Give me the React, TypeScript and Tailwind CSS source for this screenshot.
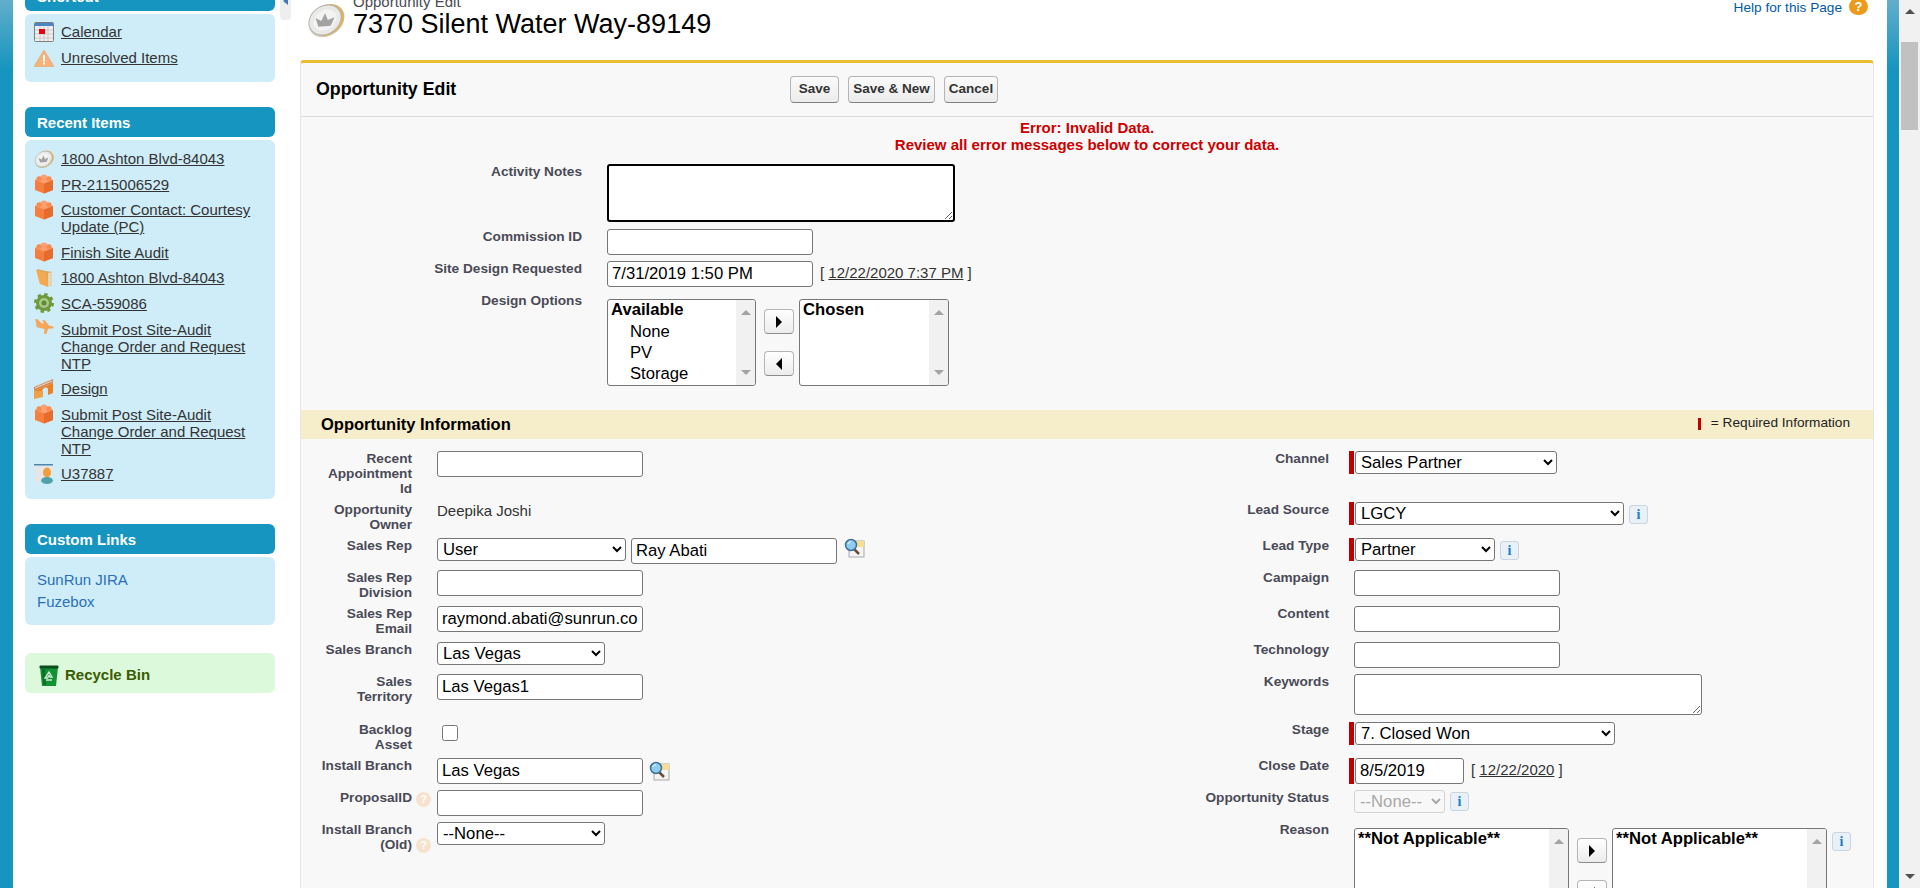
import type { ReactNode } from "react";

function Coin({ className }: { className: string }) {
  return (
    <svg viewBox="0 0 40 36" className={className}>
      <ellipse cx="20.500" cy="19" rx="20" ry="15.500" transform="rotate(-35 20.500 19)" fill="#a39a83" opacity="0.5" />
      <ellipse cx="21" cy="18" rx="19.500" ry="15.500" transform="rotate(-35 21 18)" fill="#dcb568" />
      <ellipse cx="19" cy="18" rx="18" ry="14.500" transform="rotate(-35 19 18)" fill="#e9e9e7" stroke="#b4b4b2" strokeWidth="1" />
      <ellipse cx="19" cy="18" rx="13" ry="10" transform="rotate(-35 19 18)" fill="#f3f3f2" />
      <path d="M12 25l-3-9 6 3 4-8 3 7 7-3-4 9z" fill="#a2a2a2" />
    </svg>
  );
}

function Brick() {
  return (
    <svg viewBox="0 0 20 20" className="w-[20px] h-[20px] shrink-0">
      <path d="M1 6l9-3 9 3v10l-9 3.500L1 16z" fill="#f67f40" />
      <path d="M10 9.500L19 6v10l-9 3.500z" fill="#e76b2d" />
      <path d="M1 6l9 3.500L19 6l-9-3z" fill="#fb9c66" />
      <ellipse cx="5.500" cy="4.600" rx="3" ry="2.300" fill="#f98a4f" />
      <ellipse cx="14.500" cy="4.600" rx="3" ry="2.300" fill="#f98a4f" />
      <ellipse cx="10" cy="2.800" rx="3" ry="2.300" fill="#fca071" />
      <ellipse cx="10" cy="6.600" rx="3" ry="2.300" fill="#fca071" />
    </svg>
  );
}

function CalendarIcon() {
  return (
    <svg viewBox="0 0 20 20" className="w-[20px] h-[20px] shrink-0">
      <rect x="0.500" y="0.500" width="19" height="19" rx="1" fill="#efefef" stroke="#7d7d7d" />
      <rect x="1" y="1" width="18" height="3" fill="#4a86c5" />
      <path d="M1 8h18M1 12h18M1 16h18M6 4v15M10 4v15M14 4v15" stroke="#c9c9c9" strokeWidth="1" />
      <rect x="5" y="7" width="6" height="5" fill="#e8000d" />
    </svg>
  );
}

function WarningIcon() {
  return (
    <svg viewBox="0 0 20 18" className="w-[20px] h-[18px] shrink-0">
      <path d="M10 1L20 17.500H0z" fill="#f6b27a" stroke="#eea05c" strokeWidth="0.600" />
      <rect x="9" y="6" width="2" height="6.500" fill="#fff" />
      <rect x="9" y="13.500" width="2" height="2" fill="#fff" />
    </svg>
  );
}

function FolderIcon() {
  return (
    <svg viewBox="0 0 20 20" className="w-[20px] h-[20px] shrink-0">
      <path d="M3 1l9 2 6 1v13l-4 2-8-5z" fill="#d9a764" />
      <path d="M2 2l10 3 2 14-8-3z" fill="#f5a84d" />
      <path d="M14 5l4-1v13l-4 2z" fill="#e6d5b5" />
    </svg>
  );
}

function GearIcon() {
  return (
    <svg viewBox="0 0 20 20" className="w-[20px] h-[20px] shrink-0">
      <circle cx="10" cy="10" r="8" fill="#6f9a3c" />
      <circle cx="10" cy="10" r="8.500" fill="none" stroke="#6f9a3c" strokeWidth="3" strokeDasharray="3.300 3.370" />
      <circle cx="10" cy="10" r="5" fill="#a9c98a" />
      <circle cx="10" cy="10" r="2.500" fill="#5f8a35" />
    </svg>
  );
}

function PlaneIcon() {
  return (
    <svg viewBox="0 0 20 20" className="w-[20px] h-[20px] shrink-0">
      <path d="M1 0l3 .5 3 3.500 3 .8L8 1l3 .5 4 5 3.500 1c1.500.6 1.500 1.800 0 2L14 9.800 12.500 15l-2.500-.3.500-4.700-4-1-3.500-.5-1-2.500L2.500 5z" fill="#f5a65b" />
    </svg>
  );
}

function BridgeIcon() {
  return (
    <svg viewBox="0 0 20 20" className="w-[20px] h-[20px] shrink-0">
      <path d="M0 8L19 0v4L0 12z" fill="#d48a5c" />
      <path d="M1 9l17-7" stroke="#efd9c5" strokeWidth="1" />
      <path d="M0 12L19 4v10l-5 2v-5c0-3-3-3-5-1l-1 2v5l-8 2z" fill="#f0801f" />
      <path d="M9 12v6l-9 2v-8z" fill="#eda24a" />
    </svg>
  );
}

function UserCardIcon() {
  return (
    <svg viewBox="0 0 20 20" className="w-[20px] h-[20px] shrink-0">
      <rect x="0" y="0" width="19" height="1.500" fill="#4f86ad" />
      <path d="M1 2h18v10L5 18H1z" fill="#e6e6e6" />
      <ellipse cx="13" cy="8.500" rx="4" ry="5" fill="#eda03d" />
      <ellipse cx="13" cy="16.500" rx="6" ry="3.500" fill="#4fa3a8" />
    </svg>
  );
}

function BinIcon() {
  return (
    <svg viewBox="0 0 20 22" className="w-[20px] h-[22px] shrink-0">
      <path d="M1 2h18l-2 19H3z" fill="#139234" />
      <rect x="0.500" y="0.500" width="19" height="3" rx="1" fill="#0a4d1e" />
      <path d="M3 4h3l1 16H4z" fill="#0c6f27" />
      <path d="M10 7l3 5h-2l-1-1.500L8.500 13H6zM7 15h6" stroke="#cfe8d3" strokeWidth="1.400" fill="none" />
    </svg>
  );
}

function LookupIcon() {
  return (
    <svg viewBox="0 0 21 20" className="w-[21px] h-[20px] shrink-0">
      <rect x="5" y="3" width="15" height="16" fill="#f4f4f4" stroke="#a9a9a9" />
      <rect x="13" y="3" width="7" height="6" fill="#f9dd90" />
      <path d="M9 10l6 6" stroke="#6b4d33" strokeWidth="2.500" />
      <circle cx="7" cy="7" r="5.500" fill="#8fcdf0" stroke="#3f6f95" strokeWidth="1.500" />
      <path d="M4 6c.6-1.500 1.800-2.200 3-2.200" stroke="#fff" strokeWidth="1" fill="none" />
    </svg>
  );
}

function HelpDot({ className }: { className: string }) {
  return (
    <span className={`w-[15px] h-[15px] rounded-full bg-[#f6e2cd] text-white text-[11px] leading-[15px] font-bold text-center shrink-0 ${className}`}>
      ?
    </span>
  );
}

function InfoButton({ className = "" }: { className?: string }) {
  return (
    <span className={`w-[19px] h-[19px] rounded-[3px] border border-[#c9d5e0] bg-[#e9f0f6] text-[#1b7fd0] text-[14px] leading-[17px] font-bold text-center font-['Liberation_Serif',serif] shrink-0 ml-[5px] ${className}`}>
      i
    </span>
  );
}

function SectionBar({ title }: { title: string }) {
  return (
    <div className="h-[30px] rounded-[6px] bg-[#1595bf] text-white font-bold text-[15px] leading-[31px] pl-[12px]">
      {title}
    </div>
  );
}

function SideLink({ icon, text }: { icon: ReactNode; text: string }) {
  return (
    <div className="flex gap-[7px] pl-[9px] pr-[19px]">
      <div className="w-[20px] h-[17px] shrink-0 flex items-center justify-center">{icon}</div>
      <a href="#" className="text-[15px] leading-[17px] text-[#333333] underline">
        {text}
      </a>
    </div>
  );
}

const RECENT: { icon: ReactNode; text: string }[] = [
  { icon: <Coin className="w-[20px] h-[18px] shrink-0" />, text: "1800 Ashton Blvd-84043" },
  { icon: <Brick />, text: "PR-2115006529" },
  { icon: <Brick />, text: "Customer Contact: Courtesy Update (PC)" },
  { icon: <Brick />, text: "Finish Site Audit" },
  { icon: <FolderIcon />, text: "1800 Ashton Blvd-84043" },
  { icon: <GearIcon />, text: "SCA-559086" },
  { icon: <PlaneIcon />, text: "Submit Post Site-Audit Change Order and Request NTP" },
  { icon: <BridgeIcon />, text: "Design" },
  { icon: <Brick />, text: "Submit Post Site-Audit Change Order and Request NTP" },
  { icon: <UserCardIcon />, text: "U37887" },
];

function Sidebar() {
  return (
    <aside className="w-[267px] shrink-0 pl-[12px] pr-[5px] -mt-[19px]">
      <SectionBar title="Shortcut" />
      <div className="mt-[3px] h-[68px] rounded-[6px] bg-[#cfedf8] pt-[9px] flex flex-col gap-[9px]">
        <SideLink icon={<CalendarIcon />} text="Calendar" />
        <SideLink icon={<WarningIcon />} text="Unresolved Items" />
      </div>

      <div className="mt-[25px]">
        <SectionBar title="Recent Items" />
      </div>
      <div className="mt-[3px] h-[359px] rounded-[6px] bg-[#cfedf8] pt-[10px] flex flex-col gap-[8.6px]">
        {RECENT.map((r, i) => (
          <SideLink key={i} icon={r.icon} text={r.text} />
        ))}
      </div>

      <div className="mt-[25px]">
        <SectionBar title="Custom Links" />
      </div>
      <div className="mt-[3px] h-[68px] rounded-[6px] bg-[#cfedf8] pt-[14px] pl-[12px] flex flex-col gap-[5px]">
        <a href="#" className="text-[15px] leading-[17px] text-[#2a6fbb]">SunRun JIRA</a>
        <a href="#" className="text-[15px] leading-[17px] text-[#2a6fbb]">Fuzebox</a>
      </div>

      <div className="mt-[28px] h-[40px] rounded-[6px] bg-[#dcf9dc] flex items-center gap-[6px] pl-[14px] pt-[5px]">
        <BinIcon />
        <span className="font-bold text-[15px] text-[#3a5c00]">Recycle Bin</span>
      </div>
    </aside>
  );
}

function TextInput({ value = "", width = "w-[206px]" }: { value?: string; width?: string }) {
  return (
    <input
      readOnly
      value={value}
      className={`${width} h-[26px] shrink-0 border border-[#767676] rounded-[3px] bg-white px-[4px] text-[16.67px] text-black`}
    />
  );
}

function Select({ value, width, disabled = false }: { value: string; width: string; disabled?: boolean }) {
  return (
    <select
      disabled={disabled}
      defaultValue={value}
      className={
        disabled
          ? `${width} h-[23px] shrink-0 pl-px border border-[#d4d4d4] rounded-[3px] bg-transparent text-[16.67px] text-[#a8a8a8]`
          : `${width} h-[23px] shrink-0 pl-px border border-[#767676] rounded-[3px] bg-white text-[16.67px] text-black`
      }
    >
      <option value={value}>{value}</option>
    </select>
  );
}

function RequiredMark() {
  return <span className="w-[5px] h-[23px] bg-[#c00000] shrink-0 mr-px" />;
}

function ArrowButton({ dir }: { dir: "left" | "right" }) {
  return (
    <button className="w-[30px] h-[25px] rounded-[4px] border border-[#b5b5b5] border-b-[#8c8c8c] bg-[linear-gradient(#ffffff,#ececec)] flex items-center justify-center">
      <span
        className={
          dir === "right"
            ? "border-y-[6px] border-y-transparent border-l-[6px] border-l-black"
            : "border-y-[6px] border-y-transparent border-r-[6px] border-r-black"
        }
      />
    </button>
  );
}

function ListBox({ title, items = [], className }: { title: string; items?: string[]; className: string }) {
  return (
    <div className={`flex border border-[#767676] rounded-[3px] bg-white overflow-hidden shrink-0 ${className}`}>
      <div className="flex-1 text-[16.67px] leading-[21px] text-black pl-[3px]">
        <div className="font-bold -mt-px mb-px">{title}</div>
        {items.map((it) => (
          <div key={it} className="pl-[19px]">{it}</div>
        ))}
      </div>
      <div className="w-[19px] bg-[#f1f1f1] flex flex-col items-center justify-between py-[10px]">
        <span className="border-x-[5px] border-x-transparent border-b-[5px] border-b-[#a3a3a3]" />
        <span className="border-x-[5px] border-x-transparent border-t-[5px] border-t-[#a3a3a3]" />
      </div>
    </div>
  );
}

function DualList({ left, right, items, leftWidth, rightWidth, height }: {
  left: string; right: string; items?: string[]; leftWidth: string; rightWidth: string; height: string;
}) {
  return (
    <div className="flex items-start">
      <ListBox title={left} items={items} className={`${leftWidth} ${height}`} />
      <div className="flex flex-col gap-[17px] pt-[10px] ml-[8px] mr-[5px]">
        <ArrowButton dir="right" />
        <ArrowButton dir="left" />
      </div>
      <ListBox title={right} className={`${rightWidth} ${height}`} />
    </div>
  );
}

function Label({ children, className = "" }: { children: ReactNode; className?: string }) {
  return <div className={`text-right font-bold text-[13.65px] leading-[15px] text-[#4a4a56] ${className}`}>{children}</div>;
}

// one table row of the two-column form: label, field, label, field
function InfoRow({ height, l1, f1, l2, f2 }: {
  height: string; l1: string; f1: ReactNode; l2: string; f2: ReactNode;
}) {
  return (
    <div className={`grid grid-cols-[111px_792px_125px_1fr] ${height}`}>
      <Label className="pl-[19px]">{l1}</Label>
      <div className="flex items-start pl-[25px]">{f1}</div>
      <Label>{l2}</Label>
      <div className="flex items-start pl-[20px]">{f2}</div>
    </div>
  );
}

function TopRow({ height, label, children }: { height: string; label: string; children: ReactNode }) {
  return (
    <div className={`grid grid-cols-[281px_1fr] ${height}`}>
      <Label>{label}</Label>
      <div className="flex items-start pl-[25px]">{children}</div>
    </div>
  );
}

function ActionButton({ label, width }: { label: string; width: string }) {
  return (
    <button className={`${width} h-[27px] rounded-[4px] border border-[#b5b5b5] border-b-[#7f7f7f] bg-[linear-gradient(#fafafa,#ececec)] font-bold text-[13.5px] text-[#333333]`}>
      {label}
    </button>
  );
}

function DateHint({ text }: { text: string }) {
  return (
    <span className="ml-[7px] text-[15px] leading-[24px] text-[#333333]">
      [ <a href="#" className="underline">{text}</a> ]
    </span>
  );
}

function Indent() {
  return <span className="w-[5px] shrink-0" />;
}

function OpportunityForm() {
  return (
    <div className="border-x border-[#e6e6e6] border-t-[3px] border-t-[#e8bf30] rounded-t-[4px] bg-[#f8f8f8] h-[900px]">
      <div className="h-[54px] border-b border-[#dbdbdb] flex items-center pl-[15px]">
        <h2 className="w-[474px] font-bold text-[17.8px] text-black">Opportunity Edit</h2>
        <div className="flex gap-[9px]">
          <ActionButton label="Save" width="w-[49px]" />
          <ActionButton label="Save & New" width="w-[87px]" />
          <ActionButton label="Cancel" width="w-[54px]" />
        </div>
      </div>

      <div className="h-[47px] pt-[2px] text-center font-bold text-[15px] leading-[17px] text-[#cc0000]">
        <div>Error: Invalid Data.</div>
        <div>Review all error messages below to correct your data.</div>
      </div>

      <div className="h-[246px]">
        <TopRow height="h-[65px]" label="Activity Notes">
          <textarea readOnly className="w-[348px] h-[58px] border-2 border-black rounded-[3px] bg-white" />
        </TopRow>
        <TopRow height="h-[32px]" label="Commission ID">
          <TextInput />
        </TopRow>
        <TopRow height="h-[32px]" label="Site Design Requested">
          <TextInput value="7/31/2019 1:50 PM" />
          <DateHint text="12/22/2020 7:37 PM" />
        </TopRow>
        <TopRow height="h-[93px]" label="Design Options">
          <div className="pt-[6px]">
            <DualList
              left="Available"
              right="Chosen"
              items={["None", "PV", "Storage"]}
              leftWidth="w-[149px]"
              rightWidth="w-[150px]"
              height="h-[87px]"
            />
          </div>
        </TopRow>
      </div>

      <div className="h-[29px] bg-[#f6edca] flex items-center pl-[20px] pr-[23px]">
        <h3 className="font-bold text-[16.5px] text-black">Opportunity Information</h3>
        <span className="ml-auto w-[3px] h-[12px] bg-[#c00000] -mt-[2px]" />
        <span className="ml-[10px] text-[13.65px] text-[#222222] -mt-[2px]">= Required Information</span>
      </div>

      <div className="pt-[12px]">
        <InfoRow
          height="h-[51px]"
          l1="Recent Appointment Id"
          f1={<TextInput />}
          l2="Channel"
          f2={<><RequiredMark /><Select value="Sales Partner" width="w-[202px]" /></>}
        />
        <InfoRow
          height="h-[36px]"
          l1="Opportunity Owner"
          f1={<span className="text-[15px] leading-[18px] text-[#333333]">Deepika Joshi</span>}
          l2="Lead Source"
          f2={<><RequiredMark /><Select value="LGCY" width="w-[269px]" /><InfoButton className="mt-[3px]" /></>}
        />
        <InfoRow
          height="h-[32px]"
          l1="Sales Rep"
          f1={<>
            <Select value="User" width="w-[189px]" />
            <span className="w-[5px]" />
            <TextInput value="Ray Abati" />
            <span className="w-[7px]" />
            <LookupIcon />
          </>}
          l2="Lead Type"
          f2={<><RequiredMark /><Select value="Partner" width="w-[140px]" /><InfoButton className="mt-[3px]" /></>}
        />
        <InfoRow height="h-[36px]" l1="Sales Rep Division" f1={<TextInput />} l2="Campaign" f2={<><Indent /><TextInput /></>} />
        <InfoRow
          height="h-[36px]"
          l1="Sales Rep Email"
          f1={<TextInput value="raymond.abati@sunrun.com" />}
          l2="Content"
          f2={<><Indent /><TextInput /></>}
        />
        <InfoRow
          height="h-[32px]"
          l1="Sales Branch"
          f1={<Select value="Las Vegas" width="w-[168px]" />}
          l2="Technology"
          f2={<><Indent /><TextInput /></>}
        />
        <InfoRow
          height="h-[48px]"
          l1="Sales Territory"
          f1={<TextInput value="Las Vegas1" />}
          l2="Keywords"
          f2={<><Indent /><textarea readOnly className="w-[348px] h-[41px] border border-[#767676] rounded-[3px] bg-white" /></>}
        />
        <InfoRow
          height="h-[36px]"
          l1="Backlog Asset"
          f1={<input type="checkbox" readOnly className="ml-[5px] mt-[3px] w-[16px] h-[16px]" />}
          l2="Stage"
          f2={<><RequiredMark /><Select value="7. Closed Won" width="w-[260px]" /></>}
        />
        <InfoRow
          height="h-[32px]"
          l1="Install Branch"
          f1={<><TextInput value="Las Vegas" /><span className="w-[6px]" /><span className="mt-[3px]"><LookupIcon /></span></>}
          l2="Close Date"
          f2={<>
            <span className="w-[5px] h-[26px] bg-[#c00000] shrink-0 mr-px" />
            <TextInput value="8/5/2019" width="w-[109px]" />
            <DateHint text="12/22/2020" />
          </>}
        />
        <div className="grid grid-cols-[111px_792px_125px_1fr] h-[32px]">
          <Label className="pl-[19px]">ProposalID</Label>
          <div className="flex items-start pl-[4px]">
            <HelpDot className="mt-[2px]" />
            <span className="w-[6px] shrink-0" />
            <TextInput />
          </div>
          <Label>Opportunity Status</Label>
          <div className="flex items-start pl-[20px]">
            <Indent />
            <Select value="--None--" width="w-[91px]" disabled />
            <InfoButton className="mt-[2px]" />
          </div>
        </div>
        <div className="grid grid-cols-[111px_792px_125px_1fr]">
          <Label className="pl-[19px]">Install Branch (Old)</Label>
          <div className="flex items-start pl-[4px]">
            <HelpDot className="mt-[16px]" />
            <span className="w-[6px] shrink-0" />
            <Select value="--None--" width="w-[168px]" />
          </div>
          <Label>Reason</Label>
          <div className="flex items-start pl-[20px]">
            <Indent />
            <div className="mt-[6px] flex items-start">
              <DualList
                left="**Not Applicable**"
                right="**Not Applicable**"
                leftWidth="w-[215px]"
                rightWidth="w-[215px]"
                height="h-[120px]"
              />
              <InfoButton className="mt-[4px]" />
            </div>
          </div>
        </div>
      </div>
    </div>
  );
}

function FakeScrollbar() {
  return (
    <div className="w-[21px] shrink-0 bg-[#f1f1f1] flex flex-col items-center pt-[9px] pb-[9px]">
      <span className="border-x-[5px] border-x-transparent border-b-[5px] border-b-[#505050]" />
      <span className="mt-[28px] w-[17px] h-[88px] bg-[#c1c1c1]" />
      <span className="mt-auto border-x-[5px] border-x-transparent border-t-[5px] border-t-[#505050]" />
    </div>
  );
}

export default function App() {
  return (
    <div className="h-[888px] overflow-hidden flex bg-white font-['Liberation_Sans',Arial,sans-serif]">
      <div className="w-[13px] shrink-0 bg-[linear-gradient(#62aecb,#1595bf_70px)]" />
      <Sidebar />
      <div className="w-[11px] h-[20px] shrink-0 bg-[#eeeeee] rounded-b-[4px] flex justify-center">
        <span className="border-y-[4px] border-y-transparent border-r-[5px] border-r-[#3f78c0] -mt-[3px] h-0" />
      </div>
      <span className="w-[9px] shrink-0" />

      <main className="flex-1 min-w-0 mr-[13px]">
        <div className="h-[60px] flex items-start pl-[7px] overflow-hidden">
          <Coin className="w-[38px] h-[36px] mt-[2px] shrink-0" />
          <div className="ml-[8px] -mt-[6px]">
            <div className="text-[15px] leading-[15px] text-[#4a4a56]">Opportunity Edit</div>
            <h1 className="text-[27px] leading-[30px] text-black">7370 Silent Water Way-89149</h1>
          </div>
          <div className="ml-auto flex items-start pr-[6px]">
            <a href="#" className="text-[13.65px] leading-[15px] text-[#015ba7]">Help for this Page</a>
            <span className="ml-[7px] -mt-[2px] w-[19px] h-[17px] rounded-full bg-[#ed9a1a] text-white text-[13px] leading-[17px] font-bold text-center">?</span>
          </div>
        </div>
        <OpportunityForm />
      </main>

      <div className="w-[12px] shrink-0 bg-[linear-gradient(#62aecb,#1595bf_70px)]" />
      <FakeScrollbar />
    </div>
  );
}
